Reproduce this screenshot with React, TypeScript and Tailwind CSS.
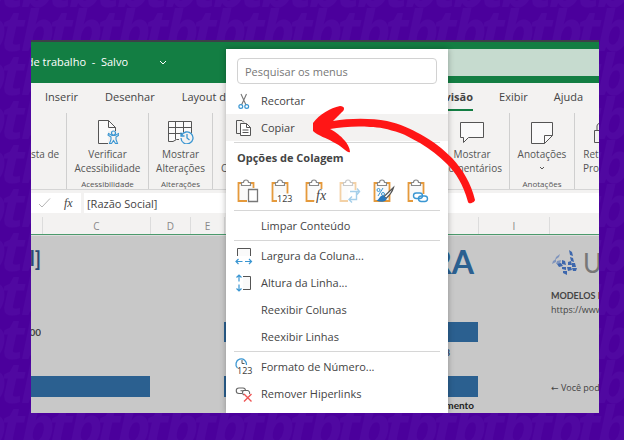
import { ReactNode } from 'react';

const Backdrop = () => (
  <svg
    aria-hidden="true"
    className="absolute inset-0 h-full w-full"
    fontFamily="Open Sans, sans-serif"
    fontSize="57"
    fontWeight="700"
    fontStyle="italic"
  >
    <defs>
      <pattern id="wordmark" x="1" y="8" width="48" height="44" patternUnits="userSpaceOnUse">
        <g fill="#5008a1">
          <text x="0" y="43">t</text>
          <text x="20" y="43">b</text>
          <text x="-28" y="43">b</text>
        </g>
      </pattern>
    </defs>
    <rect width="100%" height="100%" fill="url(#wordmark)" />
  </svg>
);

const CutIcon = () => (
  <svg width="20" height="20" viewBox="0 0 20 20" fill="none">
    <path d="M7 3 12 14M12.500 3 7.500 14" stroke="#777" strokeWidth="1.100" />
    <circle cx="6.800" cy="15.500" r="1.900" stroke="#3a96d2" strokeWidth="1.200" />
    <circle cx="12.700" cy="15.500" r="1.900" stroke="#3a96d2" strokeWidth="1.200" />
  </svg>
);

const CopyIcon = () => (
  <svg width="20" height="20" viewBox="0 0 20 20" fill="none" stroke="#555">
    <path d="M6 15.500H2.500V2.500H8L10 4.500" />
    <path d="M6.500 5.500H12.500L16.500 9.500V17.500H6.500Z" fill="#fff" />
    <path d="M12.500 5.500V9.500H16.500M8.500 12H14.500M8.500 14.500H14.500" />
  </svg>
);

const ColumnWidthIcon = () => (
  <svg width="20" height="20" viewBox="0 0 20 20" fill="none">
    <path d="M3.500 10V2.500H16.500V10" fill="#fafafa" stroke="#555" />
    <path d="M2 15.500H8.500M11 15.500H17.500M4.500 13 2 15.500 4.500 18M15 13 17.500 15.500 15 18" stroke="#3a96d2" strokeWidth="1.200" />
  </svg>
);

const RowHeightIcon = () => (
  <svg width="20" height="20" viewBox="0 0 20 20" fill="none">
    <path d="M9 3.500H16.500V16.500H9" fill="#fafafa" stroke="#555" />
    <path d="M5 2V8.500M5 11.500V18M2.500 4.500 5 2 7.500 4.500M2.500 15.500 5 18 7.500 15.500" stroke="#3a96d2" strokeWidth="1.200" />
  </svg>
);

const NumberFormatIcon = () => (
  <svg width="20" height="20" viewBox="0 0 20 20" fill="none">
    <path d="M3.500 11A5.300 5.300 0 1 1 12.500 8" stroke="#3a96d2" strokeWidth="1.300" />
    <path d="M8 3V6.500H10.500" stroke="#555" />
    <text x="3" y="17" fontSize="9" fill="#444" fontFamily="Noto Sans, sans-serif">123</text>
  </svg>
);

const RemoveLinkIcon = () => (
  <svg width="20" height="20" viewBox="0 0 20 20" fill="none">
    <path d="M8 9.500H5A2.700 2.700 0 0 1 5 4H9A2.700 2.700 0 0 1 11.500 6.500M10 11A2.700 2.700 0 0 1 9.500 6.500H13.500A2.700 2.700 0 0 1 15.500 10M6.500 6.700H9.500" stroke="#666" strokeWidth="1.100" />
    <path d="M10 10 17.500 17.500M17.500 10 10 17.500" stroke="#ee5555" strokeWidth="1.400" />
  </svg>
);

const Clipboard = ({ children, faded }: { children: ReactNode; faded?: boolean }) => (
  <svg width="22" height="24" viewBox="0 0 22 24" fill="none">
    <g opacity={faded ? 0.45 : 1}>
      <path d="M1.500 4H16.500V22H1.500Z" fill="#fafafa" stroke="#e59a3c" strokeWidth="1.800" />
      <path d="M4.500 6.500V3.500H6.500A2.500 2.500 0 0 1 11.500 3.500H13.500V6.500Z" fill="#fff" stroke="#888" strokeWidth="1.200" />
      {children}
    </g>
  </svg>
);

const pasteOptions = [
  {
    label: 'Colar',
    icon: (
      <>
        <path d="M10 9H22V24H10Z" fill="#fff" />
        <path d="M11.500 10.500H20.500V22.500H11.500Z" fill="#fff" stroke="#777" strokeWidth="1.300" />
      </>
    ),
  },
  {
    label: 'Valores',
    icon: (
      <>
        <path d="M6 14.500H21V24H6Z" fill="#fff" />
        <text x="6" y="23" fontSize="9" fill="#444" fontFamily="Noto Sans, sans-serif">123</text>
      </>
    ),
  },
  {
    label: 'Fórmulas',
    icon: (
      <>
        <path d="M11 10H21V24H9Z" fill="#fff" />
        <text x="11" y="21" fontSize="14" fontStyle="italic" fill="#444" fontFamily="Liberation Serif, serif">fx</text>
      </>
    ),
  },
  {
    label: 'Transpor',
    faded: true,
    icon: (
      <>
        <path d="M9 11H21V24H9Z" fill="#fff" />
        <path d="M11 12.500H17.500V20.500H10M17.500 12.500H20.500M18 9.500 20.500 12.500 18 15.500M13 17.500 10 20.500 13 23.500" stroke="#3a96d2" strokeWidth="1.400" />
      </>
    ),
  },
  {
    label: 'Formatação',
    icon: (
      <>
        <path d="M5 17 10 9" stroke="#3a96d2" />
        <circle cx="5.500" cy="11" r="1.500" stroke="#3a96d2" />
        <circle cx="10" cy="15" r="1.500" stroke="#3a96d2" />
        <path d="M20.500 8.500 11 17.500 13 19.500Q19 14 20.500 8.500Z" fill="#fff" stroke="#555" strokeWidth="1.200" />
        <path d="M10.500 16.500C6.500 16 7 20 3.500 21.500C8 24 14 22.500 13.500 19.500Z" fill="#2878bd" />
      </>
    ),
  },
  {
    label: 'Vínculo',
    icon: (
      <>
        <path d="M6 15H21V24H6Z" fill="#fff" />
        <rect x="6.500" y="14" width="9" height="5.500" rx="2.750" stroke="#3a96d2" strokeWidth="1.400" />
        <rect x="11.500" y="17" width="9" height="5.500" rx="2.750" stroke="#3a96d2" strokeWidth="1.400" />
      </>
    ),
  },
];

type MenuItemProps = {
  label: string;
  icon?: ReactNode;
  active?: boolean;
};

const MenuItem = ({ label, icon, active }: MenuItemProps) => (
  <button
    type="button"
    role="menuitem"
    className={`flex h-[27px] w-full items-center gap-[7px] pl-2 text-left ${active ? 'bg-[#f3f2f1]' : ''}`}
  >
    <span className="w-5 shrink-0">{icon}</span>
    <span className="pt-0.5">{label}</span>
  </button>
);

const Divider = () => <hr className="mx-2 my-px border-[#d6d6d6]" />;

const ContextMenu = () => (
  <div
    role="menu"
    className="absolute top-[9px] bottom-0 left-[195px] w-[222px] bg-white pt-[9px] text-[11px] text-[#444] shadow-[0_0_6px_rgba(0,0,0,0.3)]"
  >
    <div className="mb-[3px] px-[11px]">
      <input
        type="text"
        aria-label="Pesquisar os menus"
        placeholder="Pesquisar os menus"
        className="block h-[26px] w-full rounded-sm border border-[#d2d2d2] px-[7px] placeholder:text-[#777]"
      />
    </div>
    <MenuItem label="Recortar" icon={<CutIcon />} />
    <MenuItem label="Copiar" icon={<CopyIcon />} active />
    <Divider />
    <h2 className="px-[11px] text-[11px] leading-7 font-bold">Opções de Colagem</h2>
    <div className="flex h-[37px] items-center gap-3 px-[11px]">
      {pasteOptions.map((option) => (
        <button key={option.label} type="button" aria-label={option.label}>
          <Clipboard faded={option.faded}>{option.icon}</Clipboard>
        </button>
      ))}
    </div>
    <Divider />
    <MenuItem label="Limpar Conteúdo" />
    <Divider />
    <MenuItem label="Largura da Coluna..." icon={<ColumnWidthIcon />} />
    <MenuItem label="Altura da Linha..." icon={<RowHeightIcon />} />
    <MenuItem label="Reexibir Colunas" />
    <MenuItem label="Reexibir Linhas" />
    <Divider />
    <MenuItem label="Formato de Número..." icon={<NumberFormatIcon />} />
    <MenuItem label="Remover Hiperlinks" icon={<RemoveLinkIcon />} />
  </div>
);

const TitleBar = () => (
  <header className="flex h-[43px] items-center justify-between border-t-2 border-[#3d4048] bg-[#137e43] text-[11px] text-white">
    <div className="flex items-center">
      <div className="flex w-[97px] justify-end overflow-hidden whitespace-pre">
        de trabalho  -  Salvo
      </div>
      <button type="button" aria-label="Opções do arquivo" className="ml-[31px]">
        <svg width="8" height="6" viewBox="0 0 8 6" fill="none">
          <path d="M1 1 4 4 7 1" stroke="#fff" />
        </svg>
      </button>
    </div>
    <input type="search" aria-label="Pesquisar" className="h-[27px] w-[151px] bg-[#c6dbcf]" />
  </header>
);

const Tabs = () => (
  <nav className="flex h-7 items-center justify-between text-[11px] whitespace-nowrap text-[#444]">
    <div className="flex gap-[27px] pl-3.5">
      <a href="#inserir">Inserir</a>
      <a href="#desenhar">Desenhar</a>
      <a href="#layout">Layout d</a>
    </div>
    <div className="flex items-center gap-[26px] pr-4">
      <a href="#revisao" className="border-b-2 border-[#137e43] pt-0.5 leading-6 font-bold">Revisão</a>
      <a href="#exibir">Exibir</a>
      <a href="#ajuda">Ajuda</a>
    </div>
  </nav>
);

type GroupProps = {
  className: string;
  icon?: ReactNode;
  lines: string[];
  caption?: string;
  dropdown?: boolean;
};

const RibbonGroup = ({ className, icon, lines, caption, dropdown }: GroupProps) => (
  <div className={`flex shrink-0 flex-col items-center overflow-hidden whitespace-nowrap ${className}`}>
    <button type="button" className="flex flex-1 flex-col items-center">
      <span className="flex h-[34px] items-center">{icon}</span>
      {lines.map((line) => (
        <span key={line} className="text-[10px] leading-[14px]">{line}</span>
      ))}
      {dropdown && (
        <svg width="6" height="14" viewBox="0 0 6 14" fill="none">
          <path d="M1 6 3 8 5 6" stroke="#555" />
        </svg>
      )}
    </button>
    <span className="h-[11px] text-[8px] leading-3">{caption}</span>
  </div>
);

const Ribbon = () => (
  <div className="flex h-[79px] justify-between border-b border-[#d5d5d5] pt-0.5 text-[#555]">
    <div className="flex">
      <RibbonGroup className="w-9 items-start border-r border-[#cfcfcf] pr-2" lines={['sta de']} />
      <RibbonGroup
        className="w-[82px] border-r border-[#cfcfcf]"
        lines={['Verificar', 'Acessibilidade']}
        caption="Acessibilidade"
        icon={
          <svg width="24" height="28" viewBox="0 0 24 28" fill="none">
            <path d="M3.500 4.500H13.500L20.500 11.500V27.500H3.500Z" fill="#fafafa" stroke="#555" />
            <path d="M13.500 4.500V11.500H20.500" stroke="#555" />
            <path d="M13 15H24V28H13Z" fill="#f3f2f1" />
            <circle cx="18.500" cy="17" r="2" fill="#f3f2f1" stroke="#3a96d2" strokeWidth="1.200" />
            <path d="M13.500 17.500 17 19.500H20L23.500 17.500 24 19 21 21V23.500L22.500 27.500H20.500L18.500 24.500 16.500 27.500H14.500L16 23.500V21L13 19Z" fill="#f3f2f1" stroke="#3a96d2" strokeWidth="1.100" />
          </svg>
        }
      />
      <RibbonGroup
        className="w-16 border-r border-[#cfcfcf]"
        lines={['Mostrar', 'Alterações']}
        caption="Alterações"
        icon={
          <svg width="27" height="28" viewBox="0 0 27 28" fill="none">
            <path d="M1.500 5.500H24.500V20H15L11 24H7L5 26H1.500Z" fill="#fafafa" />
            <path d="M24.500 17V5.500H1.500V25.500H6L9.500 23.500H12M1.500 11.500H24.500M1.500 17.500H24.500M8.500 5.500V23.500M16.500 5.500V17.500" stroke="#555" />
            <circle cx="20" cy="21.500" r="6.300" fill="#f3f2f1" />
            <path d="M14.500 19.500A6 6 0 1 1 14 22M14 16.500V20H17.500M20 18V22L22.500 24" stroke="#3a96d2" strokeWidth="1.300" />
          </svg>
        }
      />
      <div className="pt-12 pl-2 text-[10px] leading-[14px]">C</div>
    </div>
    <div className="flex">
      <RibbonGroup
        className="w-[75px] border-r border-[#cfcfcf]"
        lines={['Mostrar', 'Comentários']}
        icon={
          <svg width="26" height="28" viewBox="0 0 26 28" fill="none">
            <path d="M1.500 6.500H24.500V21.500H9.500L4.500 26.500V21.500H1.500Z" fill="#fafafa" stroke="#555" />
          </svg>
        }
      />
      <RibbonGroup
        className="w-[65px] border-r border-[#cfcfcf]"
        lines={['Anotações']}
        caption="Anotações"
        dropdown
        icon={
          <svg width="24" height="28" viewBox="0 0 24 28" fill="none">
            <path d="M1.500 6.500H22.500V19.500L14.500 27.500H1.500Z" fill="#fafafa" stroke="#555" />
            <path d="M14.500 27.500V19.500H22.500" stroke="#555" />
          </svg>
        }
      />
      <RibbonGroup
        className="w-6 pl-2"
        lines={['Ret', 'Pro']}
        icon={
          <svg width="16" height="28" viewBox="0 0 16 28" fill="none">
            <path d="M16 14.500H11.500V26.500H16M14 14.500V10Q14 8 16 7.500" stroke="#555" />
          </svg>
        }
      />
    </div>
  </div>
);

const FormulaBar = () => (
  <div className="flex gap-[3px] py-[3px]">
    <div className="flex h-5 w-[50px] shrink-0 items-center gap-3 bg-white pl-1.5">
      <svg width="15" height="12" viewBox="0 0 15 12" fill="none">
        <path d="M2 7 5 10 13 1.500" stroke="#b5b5b5" />
      </svg>
      <span className="font-['Liberation_Serif',serif] text-xs leading-5 text-[#444] italic">fx</span>
    </div>
    <input
      type="text"
      aria-label="Barra de fórmulas"
      defaultValue="[Razão Social]"
      className="h-5 min-w-0 flex-1 bg-white pl-[3px] text-[11px] text-[#444]"
    />
  </div>
);

const headerCell = 'border-r border-[#dcdcdc] text-center';

const ColumnHeaders = () => (
  <div className="mt-px flex h-[18px] justify-between border-b border-[#4b9a6c] text-[10px] leading-[18px] text-[#888]">
    <div className="flex">
      <div className={`w-3 ${headerCell}`} />
      <div className={`w-[108px] ${headerCell}`}>C</div>
      <div className={`w-10 ${headerCell}`}>D</div>
      <div className={`w-[34px] ${headerCell}`}>E</div>
    </div>
    <div className="flex">
      <div className={`w-8 ${headerCell}`} />
      <div className={`w-[71px] ${headerCell}`}>I</div>
      <div className="w-[49px]" />
    </div>
  </div>
);

const Logo = () => (
  <svg className="shrink-0" width="28" height="28" viewBox="0 0 28 28">
    <path d="M9 5 5 8 4 11 8 8ZM5 10 2 12 1 15 5 13ZM6 12 10 11 9 15 5 15Z" fill="#8095bd" />
    <path d="M6 15 10 14 12 17 8 18ZM11 11 14 12 15 16 11 15ZM11 18 15 18 15 21 11 20ZM12 22 16 22 16 26 12 24ZM16 18 20 18 21 21 17 22ZM17 13 20 12 21 16 17 16ZM18 1 21 3 22 7 19 6ZM19 8 22 9 23 13 20 12ZM21 14 24 14 25 18 21 18ZM21 19 26 19 25 22 22 22Z" fill="#3d67ad" />
  </svg>
);

const Sheet = () => (
  <main className="flex h-[178px] border-t border-[#ddd] bg-[#c8c8c8] text-[#444]">
    <div className="w-[119px] shrink-0 font-['Lato',sans-serif] font-bold">
      <div className="flex h-[86px] w-2.5 justify-end overflow-hidden pt-2 text-xl text-[#2c4a72]">l]</div>
      <div className="flex h-[54px] w-2.5 justify-end overflow-hidden pt-0.5 text-[10px] leading-4">00</div>
      <div className="h-[21px] bg-[#2b6090]" />
    </div>
    <div className="ml-[74px] min-w-0 flex-1 text-right font-['Lato',sans-serif] font-bold">
      <div className="h-[86px] pt-2 pr-1 text-[32px] leading-9 text-[#2b6090]">RA</div>
      <div className="h-5 bg-[#2b6090]" />
      <div className="h-[34px] pt-0.5 pr-7 text-[10px] leading-4 text-[#2c4a72]">8</div>
      <div className="h-[21px] bg-[#2b6090]" />
      <div className="pr-1 text-[10px] leading-4 text-[#222]">mento</div>
    </div>
    <div className="ml-[73px] w-12 shrink-0 overflow-hidden whitespace-nowrap text-[10px] leading-[14px]">
      <div className="flex h-[53px] items-center gap-1 font-['Lato',sans-serif] text-[26px] text-[#777]">
        <Logo />
        Un
      </div>
      <div className="font-['Lato',sans-serif] text-[9px] font-bold">MODELOS D</div>
      <div className="text-[9px]">https://www</div>
      <div className="mt-16 text-[9px]">
        <span className="font-['DejaVu_Sans',sans-serif]">←</span> Você pod
      </div>
    </div>
  </main>
);

const Arrow = () => (
  <svg aria-hidden="true" className="absolute top-16 left-[280px]" width="168" height="102" viewBox="311 104 168 102">
    <path
      d="M313 123C320 114 330 108 340 106C345 106 345 110 342 112L333 121C350 118 371 118 387 121C400 124 411 129 420 134C433 141 443 149 452 158C463 170 471 183 475 200C475 202 469 205 468 202C463 184 456 173 447 164C439 156 430 149 420 143C412 139 406 135 400 133C388 129 379 127 370 127C356 126 342 127 330 129C338 133 350 143 350 152C348 154 342 146 333 142C327 138 318 136 313 131Z"
      fill="#ff1616"
    />
  </svg>
);

const App = () => {
  return (
    <div className="relative min-h-screen bg-[#4b009c] pt-10 pr-[25px] pb-[27px] pl-[31px] font-['Open_Sans',sans-serif]">
      <Backdrop />
      <div className="relative overflow-hidden bg-[#f3f2f1]">
        <TitleBar />
        <Tabs />
        <Ribbon />
        <FormulaBar />
        <ColumnHeaders />
        <Sheet />
        <ContextMenu />
        <Arrow />
      </div>
    </div>
  );
};

export default App;
